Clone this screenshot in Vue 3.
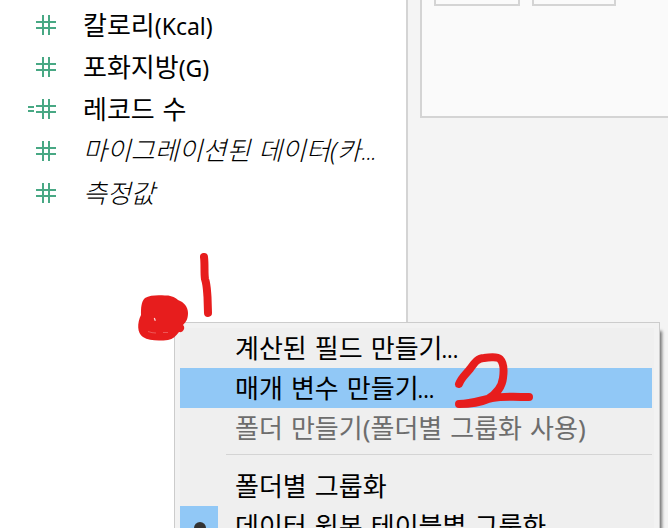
<template>
  <div class="workspace">
    <div class="data-pane">
      <div v-for="field in fields" :key="field.label" class="field">
        <svg class="field-icon" width="28" height="22" viewBox="0 0 28 22">
          <path v-if="field.calculated" d="M0 9h6M0 13h6" />
          <path d="M8 8h20M8 14h20M15 1v20M21 1v20" />
        </svg>
        <span class="field-label" :class="{ generated: field.generated }">{{ field.label }}<span class="latin">{{ field.suffix }}</span><span v-if="field.truncated" class="dots">...</span></span>
      </div>
    </div>

    <div class="canvas-pane">
      <div class="shelf">
        <div class="card"></div>
        <div class="card narrow"></div>
      </div>
    </div>

    <div class="context-menu">
      <template v-for="(item, index) in menuItems" :key="index">
        <div v-if="item.separator" class="separator"></div>
        <div v-else class="menu-item" :class="{ active: item.active, disabled: item.disabled }">
          <div class="check" :class="{ checked: item.checked }">
            <span v-if="item.checked" class="dot"></span>
          </div>
          <span class="menu-label">{{ item.label }}<span v-if="item.dialog" class="dots">...</span></span>
        </div>
      </template>
    </div>

    <!-- hand-drawn step markers -->
    <svg class="marks" width="668" height="528" viewBox="0 0 668 528">
      <path class="stroke" d="M204 257C205 265 204 273 205 279C207 285 207 291 207.500 297L208 313" />
      <path
        class="blob"
        d="M145 298C150 295 158 295 165 295.500C171 295 176 298 178 300C184 302 188 307 188 313C188 319 186 322 183 325C186 328 183 333 179 332C176 336 173 339 168 340C159 341 149 341 143 337C137 333 137 323 141 315C141 308 141 302 145 298Z"
      />
      <path class="notch" d="M154.300 318l1 2.800" />
      <path class="gap" d="M148 331.500q4 1.500 8 1.500M163 332.500h5" />
      <path class="stroke" d="M459 384C461 378 466 374 470 369C475 362 478 358 484 358C490 357 498 357 500 359C504 363 504 371 503 378C502 387 496 394 488 399C479 403 466 404 459 404C472 404 481 400 492 398C505 396 518 397 529 397" />
    </svg>
  </div>
</template>

<script setup>
const fields = [
  { label: '칼로리', suffix: '(Kcal)' },
  { label: '포화지방', suffix: '(G)' },
  { label: '레코드 수', calculated: true },
  { label: '마이그레이션된 데이터(카', generated: true, truncated: true },
  { label: '측정값', generated: true },
];

const menuItems = [
  { label: '계산된 필드 만들기', dialog: true },
  { label: '매개 변수 만들기', dialog: true, active: true },
  { label: '폴더 만들기(폴더별 그룹화 사용)', disabled: true },
  { separator: true },
  { label: '폴더별 그룹화' },
  { label: '데이터 원본 테이블별 그룹화', checked: true },
];
</script>

<style>
body {
  margin: 0;
  overflow: hidden;
}
</style>

<style scoped>
.workspace {
  position: relative;
  display: flex;
  width: 668px;
  height: 528px;
  overflow: hidden;
  background: #fff;
  color: #000;
  font-family: 'Noto Sans', 'Noto Sans CJK KR', sans-serif;
  font-size: 24px;
}

.data-pane {
  box-sizing: border-box;
  width: 408px;
  padding-top: 4px;
  border-right: 2px solid #d4d4d4;
}

.field {
  display: flex;
  align-items: center;
  height: 42px;
  padding-left: 28px;
}

.field-icon {
  flex: none;
  fill: none;
  stroke: #48a884;
  stroke-width: 2;
}

.field-label {
  margin-left: 27px;
  font-size: 26px;
  line-height: 42px;
  word-spacing: 1px;
  white-space: nowrap;
}

.latin {
  font-size: 23px;
}

.dots {
  margin-left: -1px;
  font-size: 21px;
}

.generated {
  font-style: italic;
  font-weight: 300;
}

.generated .dots {
  margin-left: 1px;
}

.canvas-pane {
  flex: 1;
  padding-left: 12px;
  background: #f4f4f4;
}

.shelf {
  box-sizing: border-box;
  display: flex;
  gap: 12px;
  height: 118px;
  padding-left: 12px;
  border-left: 2px solid #d4d4d4;
  border-bottom: 2px solid #d4d4d4;
  background: #fafafa;
}

.card {
  box-sizing: border-box;
  width: 86px;
  height: 6px;
  border: 2px solid #d4d4d4;
  border-top: none;
}

.card.narrow {
  width: 84px;
}

.context-menu {
  position: absolute;
  top: 322px;
  left: 174px;
  box-sizing: border-box;
  width: 486px;
  height: 240px;
  padding: 5px 7px 5px 5px;
  border: 1px solid #ccc;
  background: #efefef;
  box-shadow: inset 0 0 0 5px #f2f2f2, 4px 7px 3px -2px #777;
}

.menu-item {
  display: flex;
  height: 40px;
}

.menu-item.active {
  background: #91c8f6;
}

.menu-item.disabled {
  color: #6d6d6d;
}

.check {
  display: flex;
  align-items: center;
  justify-content: center;
  width: 38px;
}

.check.checked {
  background: #91c8f6;
}

.dot {
  width: 12px;
  height: 12px;
  margin: 4px 0 0 2px;
  border-radius: 50%;
  background: #333;
}

.menu-label {
  margin-left: 17px;
  font-size: 26px;
  line-height: 40px;
  word-spacing: 1.3px;
  white-space: nowrap;
}

.separator {
  height: 1px;
  margin: 6px 0 11px 46px;
  background: #d4d4d4;
}

.marks {
  position: absolute;
  top: 0;
  left: 0;
}

.stroke {
  fill: none;
  stroke: #e71d1d;
  stroke-width: 8;
  stroke-linecap: round;
  stroke-linejoin: round;
}

.blob {
  fill: #e71d1d;
}

.notch {
  stroke: #fbe0e0;
  stroke-width: 1.2;
}

.gap {
  fill: none;
  stroke: #f07070;
  stroke-width: 0.7;
}
</style>
